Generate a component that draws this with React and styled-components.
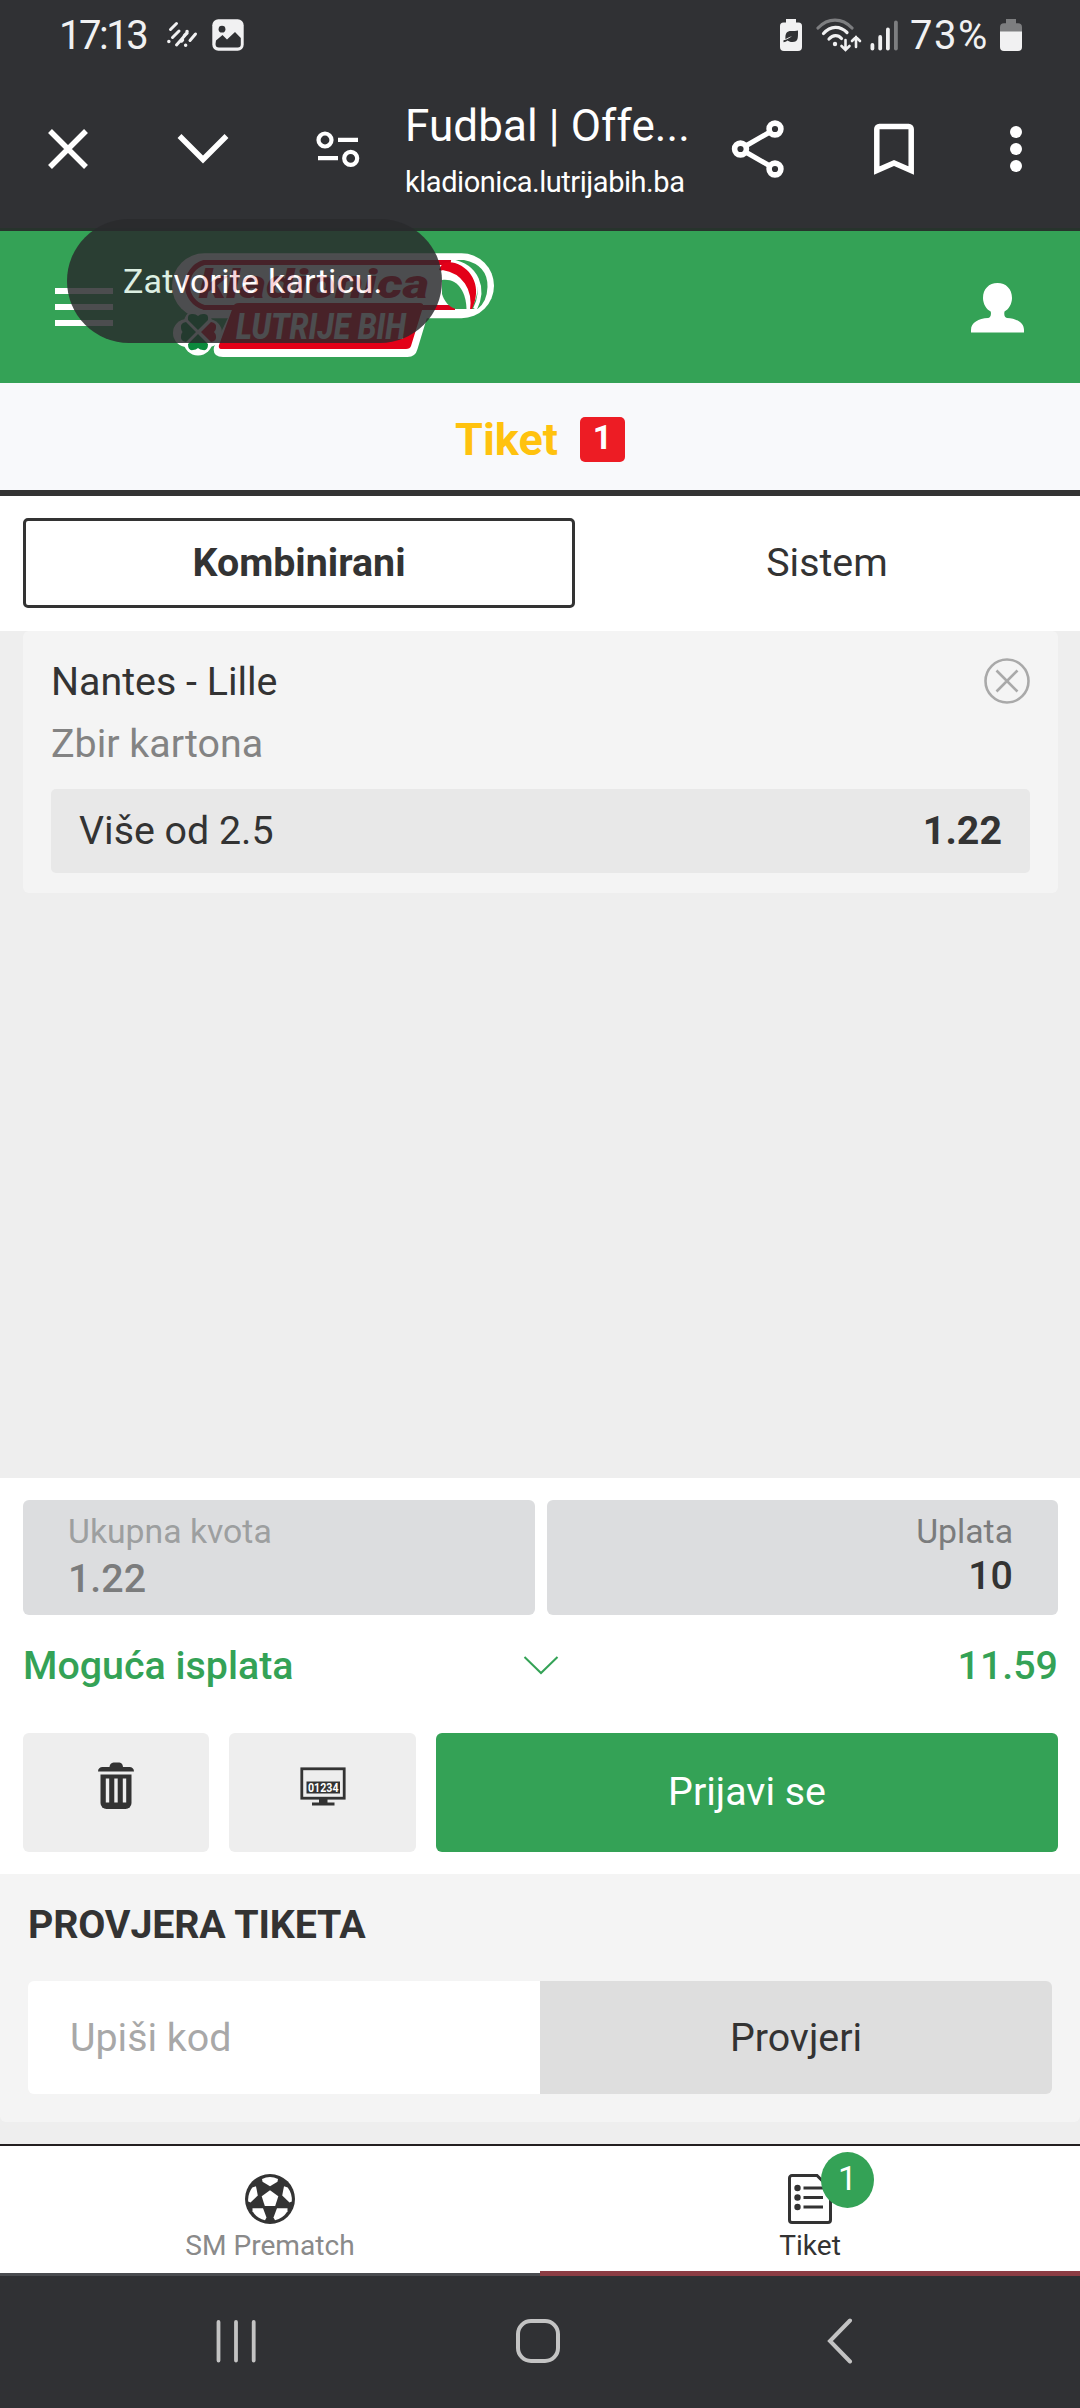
import React from "react";
import styled, { createGlobalStyle } from "styled-components";

const green = "#34a256";
const ink = "#333333";
const chrome = "#303134";

const GlobalStyle = createGlobalStyle`
  *, *::before, *::after { box-sizing: border-box; }
  html, body { margin: 0; padding: 0; background: #eeeeee; }
  body { font-family: Roboto, "Liberation Sans", sans-serif; color: ${ink}; }
  button, input { font: inherit; color: inherit; border: 0; margin: 0; padding: 0; border-radius: 0; }
  svg { display: block; flex: none; }
`;

const Screen = styled.div`
  width: 1080px;
  height: 2408px;
  display: flex;
  flex-direction: column;
  position: relative;
  overflow: hidden;
  background: #eeeeee;
`;

/* ---------- phone status bar ---------- */
const StatusBar = styled.div`
  height: 70px;
  flex: none;
  background: ${chrome};
  display: flex;
  align-items: center;
  padding: 0 58px 0 59px;
`;
const StatusText = styled.span`
  font-size: 40px;
  line-height: 72px;
  height: 70px;
  width: ${(p) => p.$width}px;
  letter-spacing: ${(p) => p.$spacing}px;
  white-space: nowrap;
  color: #f1f1f2;
`;
const StatusGroup = styled.div`
  display: flex;
  align-items: center;
  gap: ${(p) => p.$gap}px;
  margin-left: ${(p) => p.$push || "0"};
`;

/* ---------- browser toolbar ---------- */
const Toolbar = styled.div`
  height: 161px;
  flex: none;
  background: ${chrome};
  border-bottom: 3px solid #27332c;
  display: grid;
  grid-template-columns: 136px 134px 136px 284px 136px 136px 108px;
`;
const ToolButton = styled.button`
  background: transparent;
  display: flex;
  align-items: center;
  justify-content: center;
`;
const PageInfo = styled.div`
  display: flex;
  flex-direction: column;
  padding-top: 29px;
  color: #ffffff;
  white-space: nowrap;
`;
const PageTitle = styled.div`
  font-size: 44px;
  line-height: 54px;
  margin-left: -1px;
  letter-spacing: ${(p) => p.$spacing}px;
`;
const PageUrl = styled.div`
  font-size: 29px;
  line-height: 36px;
  margin-top: 11px;
  margin-left: -1px;
  letter-spacing: ${(p) => p.$spacing}px;
`;

/* ---------- site header ---------- */
const SiteHeader = styled.header`
  height: 152px;
  flex: none;
  background: ${green};
  display: flex;
  align-items: flex-start;
  padding: 0 56px 0 55px;
`;
const Hamburger = styled.div`
  width: 58px;
  margin-top: 57px;
  display: flex;
  flex-direction: column;
  gap: 10px;
`;
const HamburgerLine = styled.span`
  height: 6px;
  background: #ffffff;
`;
const LogoBox = styled.div`
  margin: 14px 0 0 52px;
`;
const UserBox = styled.div`
  margin: 52px 0 0 auto;
`;

const Toast = styled.div`
  position: absolute;
  left: 67px;
  top: 219px;
  width: 375px;
  height: 124px;
  border-radius: 62px;
  background: #292a2c;
  opacity: 0.83;
  color: #ffffff;
  font-size: 34px;
  line-height: 124px;
  padding-left: 56px;
  white-space: nowrap;
  letter-spacing: 0.2px;
`;

/* ---------- ticket title ---------- */
const TitleBar = styled.div`
  height: 113px;
  flex: none;
  background: #f8f9fb;
  border-bottom: 6px solid #333333;
  display: flex;
  align-items: center;
  justify-content: center;
  gap: 22px;
  padding-top: 6px;
`;
const Title = styled.h1`
  margin: 0;
  font-size: 45px;
  font-weight: 700;
  line-height: 50px;
  color: #ffc20e;
`;
const CountTag = styled.span`
  width: 45px;
  height: 45px;
  border-radius: 5px;
  background: #ed1c24;
  color: #ffffff;
  font-size: 33.75px;
  font-weight: 700;
  line-height: 41px;
  text-align: center;
`;

/* ---------- tabs ---------- */
const Tabs = styled.div`
  height: 135px;
  flex: none;
  background: #ffffff;
  display: grid;
  grid-template-columns: 552px 504px;
  align-content: center;
  padding: 0 0 1px 23px;
`;
const Tab = styled.button`
  height: 90px;
  border-radius: 5px;
  border: 3px solid ${(p) => (p.$active ? ink : "transparent")};
  background: transparent;
  padding-bottom: 1px;
  font-size: 39.375px;
  font-weight: ${(p) => (p.$active ? 700 : 400)};
`;

/* ---------- selections ---------- */
const Selections = styled.main`
  height: 847px;
  flex: none;
  padding: 0 22px 0 23px;
`;
const Card = styled.section`
  background: #f4f4f4;
  border-radius: 6px;
  padding: 19px 28px 20px;
  font-size: 39.375px;
`;
const CardRow = styled.div`
  height: 62px;
  display: flex;
  align-items: center;
  justify-content: space-between;
  color: ${(p) => (p.$muted ? "#838383" : ink)};
`;
const OddRow = styled.div`
  height: 84px;
  margin-top: 15px;
  border-radius: 5px;
  background: #e8e8e8;
  display: flex;
  align-items: center;
  justify-content: space-between;
  padding: 0 28px 2px;
`;
const Odd = styled.strong`
  font-weight: 700;
`;

/* ---------- summary ---------- */
const Summary = styled.section`
  height: 396px;
  flex: none;
  background: #ffffff;
  padding: 22px 22px 0 23px;
`;
const Stakes = styled.div`
  display: grid;
  grid-template-columns: 1fr 1fr;
  gap: 12px;
`;
const StakeBox = styled.div`
  height: 115px;
  border-radius: 6px;
  background: #dcdddf;
  padding: 12px 45px 0;
  text-align: ${(p) => p.$align};
`;
const StakeLabel = styled.div`
  font-size: 33.75px;
  line-height: 40px;
  color: ${(p) => p.$color};
`;
const StakeValue = styled.div`
  font-size: 39.375px;
  font-weight: 500;
  line-height: ${(p) => p.$line}px;
  color: ${(p) => p.$color};
`;
const Payout = styled.div`
  height: 101px;
  display: grid;
  grid-template-columns: 1fr 36px 1fr;
  align-items: center;
  color: ${green};
  font-size: 39.375px;
  font-weight: 500;
`;
const PayoutValue = styled.span`
  text-align: right;
`;
const Actions = styled.div`
  margin-top: 17px;
  height: 119px;
  display: grid;
  grid-template-columns: 186px 187px 1fr;
  gap: 20px;
`;
const ActionButton = styled.button`
  border-radius: 6px;
  background: ${(p) => (p.$primary ? green : "#eeeeee")};
  color: ${(p) => (p.$primary ? "#ffffff" : ink)};
  font-size: 39.375px;
  display: flex;
  justify-content: center;
  align-items: ${(p) => (p.$primary ? "center" : "flex-start")};
  padding-top: ${(p) => p.$top || 0}px;
  padding-bottom: ${(p) => (p.$primary ? 2 : 0)}px;
`;

/* ---------- ticket check ---------- */
const CheckPanel = styled.section`
  height: 248px;
  flex: none;
  background: #f4f4f4;
  border-radius: 0 0 6px 6px;
  padding: 27px 28px 0;
`;
const CheckTitle = styled.h2`
  margin: 0 0 32px;
  font-size: 39.375px;
  font-weight: 700;
  line-height: 48px;
  letter-spacing: -0.15px;
`;
const CheckForm = styled.div`
  display: grid;
  grid-template-columns: 1fr 1fr;
  height: 113px;
  border-radius: 6px;
  overflow: hidden;
  font-size: 39.375px;
`;
const CodeInput = styled.input`
  min-width: 0;
  background: #ffffff;
  padding-left: 42px;
  outline: none;
  &::placeholder { color: #a8a8a8; opacity: 1; }
`;
const CheckButton = styled.button`
  background: #dedede;
`;

/* ---------- bottom tabs ---------- */
const BottomNav = styled.nav`
  margin-top: 22px;
  height: 132px;
  flex: none;
  background: #ffffff;
  border-top: 2px solid #231f20;
  display: grid;
  grid-template-columns: 1fr 1fr;
`;
const NavItem = styled.div`
  display: flex;
  flex-direction: column;
  align-items: center;
  padding-top: 28px;
  border-bottom: ${(p) => (p.$active ? "5px solid #8c3d44" : "3px solid #4a4c50")};
  color: ${(p) => (p.$active ? ink : "#8a8a8a")};
  font-size: 28.125px;
  line-height: 34px;
`;
const NavLabel = styled.span`
  margin-top: 5px;
`;
const NavIcon = styled.div`
  position: relative;
  height: 50px;
`;
const NavBadge = styled.span`
  position: absolute;
  left: 33px;
  top: -22px;
  width: 53px;
  height: 56px;
  border-radius: 50%;
  background: ${green};
  color: #ffffff;
  font-size: 33.75px;
  line-height: 53px;
  text-align: center;
`;

const SystemNav = styled.div`
  flex: 1;
  background: ${chrome};
  display: flex;
  align-items: center;
  justify-content: space-between;
  padding: 0 226px 2px 216px;
`;

/* ---------- drawings ---------- */
const StripesIcon = () => (
  <svg width="32" height="28" viewBox="0 0 32 28" stroke="#f1f1f2" strokeWidth="3" strokeLinecap="round" fill="none">
    <path d="M4.500 8.500 10.500 2.500M6.500 16.500 13 10M10.500 24 18 15.500M24 19.500 29.500 13" />
    <path d="M2.800 20.500h.1M15.500 20l1-1M21 10.500h.1M18.500 14.500 21 12M19.600 24.300h.1" strokeWidth="3.400" />
  </svg>
);
const GalleryIcon = () => (
  <svg width="32" height="32" viewBox="0 0 32 32">
    <rect x="0.300" y="0.300" width="31.400" height="31.400" rx="6" fill="#f1f1f2" />
    <circle cx="10" cy="10.200" r="3.400" fill={chrome} />
    <path d="M4 21.500 10.500 16l4.500 4.500L23 13l5.800 6V25.500a3 3 0 0 1-3 3H7a3.500 3.500 0 0 1-3.500-3.500z" fill={chrome} />
  </svg>
);
const PowerSaveIcon = () => (
  <svg width="22" height="32" viewBox="0 0 22 32">
    <path d="M6 0h10v3.500h2.500a3.500 3.500 0 0 1 3.500 3.500v21a4 4 0 0 1-4 4H4a4 4 0 0 1-4-4V7a3.500 3.500 0 0 1 3.500-3.500H6z" fill="#f1f1f2" />
    <path d="M18 11.500c0 7 .5 11.500-5.500 11.500-2.500 0-4-.6-5-1.500-1.500 1-2.500 1.700-4 1.700v-2c3 0 6-2.500 8.500-4-2.500.5-4.500 1.800-6.500 3C5 14 7 12 11 12c3 0 5 0 7-.5z" fill={chrome} />
  </svg>
);
const WifiIcon = () => (
  <svg width="46" height="34" viewBox="0 0 46 34" fill="none" strokeLinecap="round" stroke="#f1f1f2" strokeWidth="3.200">
    <path d="M2 10C12-.5 26-.5 36 10" stroke="#7d7e80" />
    <path d="M7.500 15.500c7-8 16.500-8 23.500-1M13 21c4-4.500 9-4.500 12.500-.5" />
    <circle cx="19" cy="26" r="2.200" fill="#f1f1f2" stroke="none" />
    <path d="M29.500 22v9.500M25.500 28l4 4 4-4M40 29V19M36 23l4-4 4 4" strokeWidth="2.600" />
  </svg>
);
const SignalIcon = () => (
  <svg width="28" height="31" viewBox="0 0 28 31" fill="#f1f1f2">
    <rect x="0.500" y="23" width="3.800" height="7.500" rx="1.900" />
    <rect x="8.300" y="15" width="3.800" height="15.500" rx="1.900" />
    <rect x="16" y="7.500" width="3.800" height="23" rx="1.900" />
    <rect x="24" y="0.500" width="3.800" height="30" rx="1.900" fill="#7d7e80" />
  </svg>
);
const BatteryIcon = () => (
  <svg width="22" height="32" viewBox="0 0 22 32">
    <path d="M6 0h10v4.200h2a4 4 0 0 1 4 4V13H0V8.200a4 4 0 0 1 4-4h2z" fill="#7d7e80" />
    <path d="M0 12.500h22V28a4 4 0 0 1-4 4H4a4 4 0 0 1-4-4z" fill="#f1f1f2" />
  </svg>
);
const CloseTabIcon = () => (
  <svg width="44" height="44" viewBox="0 0 44 44" stroke="#fff" strokeWidth="5.500">
    <path d="M4 4 40 40M40 4 4 40" />
  </svg>
);
const ChevronIcon = () => (
  <svg width="54" height="34" viewBox="0 0 54 34" fill="none" stroke="#fff" strokeWidth="5.500">
    <path d="M3.500 4 27 27.500 50.500 4" />
  </svg>
);
const TuneIcon = () => (
  <svg width="44" height="38" viewBox="0 0 44 38" fill="none" stroke="#fff" strokeWidth="4.200">
    <circle cx="9" cy="10" r="6.500" />
    <circle cx="34.700" cy="28.300" r="6.500" />
    <path d="M22 9.800h20M2 28.200h20" />
  </svg>
);
const ShareIcon = () => (
  <svg width="54" height="60" viewBox="0 0 54 60" fill="none" stroke="#fff" strokeWidth="5.600">
    <circle cx="9.500" cy="30" r="5.900" />
    <circle cx="44" cy="10" r="5.900" />
    <circle cx="44" cy="50" r="5.900" />
    <path d="M14.600 27 39 13M14.600 33 39 47" strokeWidth="5" />
  </svg>
);
const BookmarkIcon = () => (
  <svg width="40" height="52" viewBox="0 0 40 52" fill="none" stroke="#fff" strokeWidth="5.500">
    <path d="M2.800 47.500V6a2.500 2.500 0 0 1 2.500-2.500h29.400A2.500 2.500 0 0 1 37.200 6v41.500L20 40z" />
  </svg>
);
const DotsIcon = () => (
  <svg width="12" height="46" viewBox="0 0 12 46" fill="#fff">
    <circle cx="6" cy="6" r="6" />
    <circle cx="6" cy="23" r="6" />
    <circle cx="6" cy="40" r="6" />
  </svg>
);
const UserIcon = () => (
  <svg width="53" height="50" viewBox="0 0 53 50" fill="#fff">
    <path d="M26.500 0C35 0 41 6 41 15c0 6-3.500 11.500-7.500 13.500-.8 4 .5 6 2.500 6.500C45.500 35.500 53 39.500 53 47v2.500H0V47c0-7.500 7.500-11.500 17-12 2-.5 3.600-2.500 2.700-6.500C15.500 26.500 12 21 12 15 12 6 18 0 26.500 0z" />
  </svg>
);

const Logo = () => (
  <svg width="335" height="118" viewBox="0 0 335 118">
    <rect x="7" y="8.300" width="322" height="65" rx="32.500" fill="#fff" />
    <path d="M71 56H267L252.500 104q-2 8-10 8H58q-11 0-9-10z" fill="#fff" />
    <path d="M290 17.500H39a23.500 23.500 0 0 0 0 45H290" fill="none" stroke="#d8001b" strokeWidth="5" />
    <path d="M286 15h13q24 5 23.500 27-.5 15-10 22l-7 0c14-20 6-42-19.500-49z" fill={green} />
    <path d="M286 16c27 5 34 28 24 48" fill="none" stroke="#fff" strokeWidth="4" />
    <path d="M274 25C276 18 282 16 290 18 308 24 317 43 307 64L304 64C306 42 294 28 274 25z" fill="#e30018" />
    <path d="M277 27c19 3 29 18 26 38" fill="none" stroke="#fff" strokeWidth="4" />
    <path d="M277 35c16-2 24 12 24.500 29h-11C284 62 279 56 277 49z" fill={green} />
    <text x="34" y="53" fontFamily="Roboto, sans-serif" fontSize="40" fontWeight="900" fontStyle="italic" fill="#d8001b" textLength="230" lengthAdjust="spacingAndGlyphs">kladionica</text>
    <path d="M74 58H255q4 0 3 4L246 101q-1 3-5 3H57q-4 0-3-4L68 62q1-4 6-4z" fill="#e30018" />
    <text x="71" y="93.500" fontFamily="Roboto, sans-serif" fontSize="37" fontWeight="800" fontStyle="italic" fill="#fff" textLength="170" lengthAdjust="spacingAndGlyphs">LUTRIJE BIH</text>
    <g fill="#fff">
      <circle cx="33" cy="78" r="14" />
      <circle cx="22" cy="88" r="14" />
      <circle cx="43" cy="88" r="14" />
      <circle cx="33" cy="96" r="14.500" />
    </g>
    <g fill="#0b8a3c">
      <path d="M33 85 23 75q-1-7 5-6 3 0 5 2 2-2 5-2 6-1 5 6z" />
      <path d="M31 87 21 77q-6 1-5 6 0 2 1.500 4Q16 89 16 91q-1 5 5 6z" />
      <path d="M33 89 23 99q0 7 5 6 3 0 5-2 2 2 5 2 5 1 5-6z" />
    </g>
    <path d="M36 87 46 77q6 1 5 6 0 2-2 4 2 2 2 4 1 5-5 6z" fill="#e30018" />
  </svg>
);

const RemoveIcon = () => (
  <svg width="46" height="46" viewBox="0 0 46 46" fill="none" stroke="#a9a9a9" strokeWidth="2.600">
    <circle cx="23" cy="23" r="21.500" />
    <path d="M12.500 12.500 33.500 33.500M33.500 12.500 12.500 33.500" />
  </svg>
);
const ThinChevron = () => (
  <svg width="36" height="20" viewBox="0 0 36 20" fill="none" stroke={green} strokeWidth="2">
    <path d="M1.500 1 18 17 34.500 1" />
  </svg>
);
const TrashIcon = () => (
  <svg width="38" height="48" viewBox="0 0 38 48">
    <path d="M1 9.500C1 6.500 3 5 5.500 5H12.500C13 1.500 15 .5 17.500 .5h4C24 .5 25.500 1.500 26 5h6.500C35 5 37 6.500 37 9.500z" fill={ink} />
    <path d="M3.500 12.500h31V41a6 6 0 0 1-6 6h-19a6 6 0 0 1-6-6z" fill={ink} />
    <path d="M10.500 16.500v24M19 16.500v24M27.500 16.500v24" stroke="#eeeeee" strokeWidth="3.400" />
  </svg>
);
const MonitorIcon = () => (
  <svg width="46" height="39" viewBox="0 0 46 39">
    <rect x="1.800" y="1.800" width="42.400" height="29.400" fill="none" stroke={ink} strokeWidth="2.800" />
    <rect x="6.500" y="14.500" width="33.500" height="12" fill={ink} />
    <path d="M19 32h8.500v3.500h7V38.500H12V35.500h7z" fill={ink} />
    <text x="8" y="24.800" fontFamily="Roboto, sans-serif" fontSize="12" fontWeight="700" fill="#fff" textLength="30.500" lengthAdjust="spacingAndGlyphs">01234</text>
  </svg>
);
const BallIcon = () => (
  <svg width="50" height="50" viewBox="0 0 50 50">
    <circle cx="25" cy="25" r="25" fill={ink} />
    <g fill="#fff">
      <path d="M25 16.200 33.300 22.300 30.200 32H19.800L16.700 22.300z" />
      <path d="M17 5Q25 1.200 33 5L32.500 7.800 25 12.200 17.500 7.800z" />
      <path d="M11 12.300 7.300 13.500Q2.500 20 3.200 27.500L5.500 28.500 12.800 21.500z" />
      <path d="M39 12.300 42.700 13.500Q47.500 20 46.800 27.500L44.500 28.500 37.200 21.500z" />
      <path d="M7.500 34.300H18L21.500 43.500 20 46.200Q12 44.500 7.500 37.300z" />
      <path d="M42.500 34.300H32L28.500 43.500 30 46.200Q38 44.500 42.500 37.300z" />
    </g>
  </svg>
);
const TicketIcon = () => (
  <svg width="44" height="50" viewBox="0 0 44 50" fill="none" stroke={ink}>
    <path d="M4 1.500H29L42.500 15V46a2.500 2.500 0 0 1-2.500 2.500H4A2.500 2.500 0 0 1 1.500 46V4A2.500 2.500 0 0 1 4 1.500z" strokeWidth="3" />
    <path d="M15.500 14H35M15.500 23.500H35M15.500 33H35" strokeWidth="2.800" />
    <g fill={ink} stroke="none">
      <circle cx="9.500" cy="14" r="3.200" />
      <circle cx="9.500" cy="23.500" r="3.200" />
      <circle cx="9.500" cy="33" r="3.200" />
    </g>
  </svg>
);
const RecentsIcon = () => (
  <svg width="40" height="44" viewBox="0 0 40 44" stroke="#c3c3c3" strokeWidth="3.800" strokeLinecap="round">
    <path d="M2.500 3v38.500M20 3v38.500M37.700 3v38.500" />
  </svg>
);
const HomeIcon = () => (
  <svg width="52" height="46" viewBox="0 0 52 46" fill="none" stroke="#c3c3c3" strokeWidth="4">
    <rect x="3" y="3" width="40" height="40" rx="13" />
  </svg>
);
const BackIcon = () => (
  <svg width="28" height="46" viewBox="0 0 28 46" fill="none" stroke="#c3c3c3" strokeWidth="4" strokeLinecap="round">
    <path d="M24 2.500 4 23 24 43.500" />
  </svg>
);

export default function App() {
  return (
    <>
      <GlobalStyle />
      <Screen>
        <StatusBar>
          <StatusText $width={107} $spacing={-2.5}>17:13</StatusText>
          <StatusGroup $gap={14}>
            <StripesIcon />
            <GalleryIcon />
          </StatusGroup>
          <StatusGroup $gap={14} $push="auto">
            <PowerSaveIcon />
            <WifiIcon />
          </StatusGroup>
          <StatusGroup $gap={12} $push="8px">
            <SignalIcon />
            <StatusText $width={78} $spacing={1.5}>73%</StatusText>
            <BatteryIcon />
          </StatusGroup>
        </StatusBar>

        <Toolbar>
          <ToolButton><CloseTabIcon /></ToolButton>
          <ToolButton><ChevronIcon /></ToolButton>
          <ToolButton><TuneIcon /></ToolButton>
          <PageInfo>
            <PageTitle $spacing={0.1}>Fudbal | Offe...</PageTitle>
            <PageUrl $spacing={-0.45}>kladionica.lutrijabih.ba</PageUrl>
          </PageInfo>
          <ToolButton><ShareIcon /></ToolButton>
          <ToolButton><BookmarkIcon /></ToolButton>
          <ToolButton><DotsIcon /></ToolButton>
        </Toolbar>

        <SiteHeader>
          <Hamburger>
            <HamburgerLine />
            <HamburgerLine />
            <HamburgerLine />
          </Hamburger>
          <LogoBox><Logo /></LogoBox>
          <UserBox><UserIcon /></UserBox>
        </SiteHeader>

        <TitleBar>
          <Title>Tiket</Title>
          <CountTag>1</CountTag>
        </TitleBar>

        <Tabs>
          <Tab $active>Kombinirani</Tab>
          <Tab>Sistem</Tab>
        </Tabs>

        <Selections>
          <Card>
            <CardRow>
              <span>Nantes - Lille</span>
              <RemoveIcon />
            </CardRow>
            <CardRow $muted>Zbir kartona</CardRow>
            <OddRow>
              <span>Više od 2.5</span>
              <Odd>1.22</Odd>
            </OddRow>
          </Card>
        </Selections>

        <Summary>
          <Stakes>
            <StakeBox $align="left">
              <StakeLabel $color="#9d9fa0">Ukupna kvota</StakeLabel>
              <StakeValue $color="#7b7c7d" $line={54}>1.22</StakeValue>
            </StakeBox>
            <StakeBox $align="right">
              <StakeLabel $color="#7b7c7d">Uplata</StakeLabel>
              <StakeValue $color={ink} $line={47}>10</StakeValue>
            </StakeBox>
          </Stakes>
          <Payout>
            <span>Moguća isplata</span>
            <ThinChevron />
            <PayoutValue>11.59</PayoutValue>
          </Payout>
          <Actions>
            <ActionButton $top={29}><TrashIcon /></ActionButton>
            <ActionButton $top={34}><MonitorIcon /></ActionButton>
            <ActionButton $primary>Prijavi se</ActionButton>
          </Actions>
        </Summary>

        <CheckPanel>
          <CheckTitle>PROVJERA TIKETA</CheckTitle>
          <CheckForm>
            <CodeInput placeholder="Upiši kod" />
            <CheckButton>Provjeri</CheckButton>
          </CheckForm>
        </CheckPanel>

        <BottomNav>
          <NavItem>
            <NavIcon><BallIcon /></NavIcon>
            <NavLabel>SM Prematch</NavLabel>
          </NavItem>
          <NavItem $active>
            <NavIcon>
              <TicketIcon />
              <NavBadge>1</NavBadge>
            </NavIcon>
            <NavLabel>Tiket</NavLabel>
          </NavItem>
        </BottomNav>

        <SystemNav>
          <RecentsIcon />
          <HomeIcon />
          <BackIcon />
        </SystemNav>

        <Toast role="tooltip">Zatvorite karticu.</Toast>
      </Screen>
    </>
  );
}
